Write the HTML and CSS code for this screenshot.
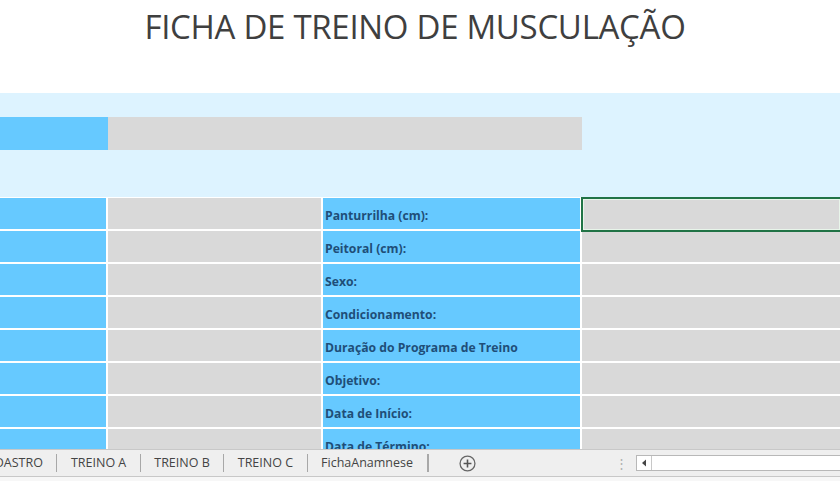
FILE: index.html
```html
<!DOCTYPE html>
<html lang="pt">
<head>
<meta charset="utf-8">
<title>Ficha de Treino de Musculação</title>
<link rel="stylesheet" href="styles.css">
</head>
<body>
<div class="page">
  <header class="title-area">
    <h1 class="title">FICHA DE TREINO DE MUSCULAÇÃO</h1>
  </header>
  <section class="band">
    <div class="band-row">
      <div class="cell-blue band-label"></div>
      <div class="cell-gray band-value"></div>
    </div>
  </section>
  <section class="grid">
    <div class="cell-blue"></div><div class="cell-gray"></div><div class="cell-blue label">Panturrilha (cm):</div><div class="cell-gray selected"></div>
    <div class="cell-blue"></div><div class="cell-gray"></div><div class="cell-blue label">Peitoral (cm):</div><div class="cell-gray"></div>
    <div class="cell-blue"></div><div class="cell-gray"></div><div class="cell-blue label">Sexo:</div><div class="cell-gray"></div>
    <div class="cell-blue"></div><div class="cell-gray"></div><div class="cell-blue label">Condicionamento:</div><div class="cell-gray"></div>
    <div class="cell-blue"></div><div class="cell-gray"></div><div class="cell-blue label">Duração do Programa de Treino</div><div class="cell-gray"></div>
    <div class="cell-blue"></div><div class="cell-gray"></div><div class="cell-blue label">Objetivo:</div><div class="cell-gray"></div>
    <div class="cell-blue"></div><div class="cell-gray"></div><div class="cell-blue label">Data de Início:</div><div class="cell-gray"></div>
    <div class="cell-blue"></div><div class="cell-gray"></div><div class="cell-blue label">Data de Término:</div><div class="cell-gray"></div>
  </section>
  <nav class="tabbar">
    <div class="tabs">
      <span class="tab tab-first">CADASTRO</span>
      <span class="tab">TREINO A</span>
      <span class="tab">TREINO B</span>
      <span class="tab">TREINO C</span>
      <span class="tab">FichaAnamnese</span>
      <span class="tab tab-end"></span>
    </div>
    <span class="add-sheet">
      <svg width="17" height="17" viewBox="0 0 16 16"><circle cx="8" cy="8" r="7" fill="none" stroke="#666" stroke-width="1.2"/><path d="M8 4.3v7.4M4.3 8h7.4" stroke="#555" stroke-width="1.5"/></svg>
    </span>
    <span class="dots">⋮</span>
    <div class="hscroll">
      <span class="arrow">
        <svg width="6" height="8" viewBox="0 0 6 8"><path d="M5 0.5L1 4l4 3.5z" fill="#444"/></svg>
      </span>
      <span class="track"></span>
    </div>
  </nav>
  <div class="status-strip"></div>
</div>
</body>
</html>
```
FILE: styles.css
```css
html, body {
  margin: 0;
  padding: 0;
  background: #ffffff;
}

.page {
  width: 840px;
  height: 481px;
  display: flex;
  flex-direction: column;
  overflow: hidden;
}

.title-area {
  height: 93px;
  flex: none;
  display: flex;
  justify-content: center;
  padding-right: 10px;
  box-sizing: border-box;
  background: #ffffff;
}

.title {
  margin: 6px 0 0 0;
  font-family: "Open Sans", "Liberation Sans", sans-serif;
  font-weight: 400;
  font-size: 33px;
  line-height: 42px;
  color: #3f3f3f;
  letter-spacing: -0.3px;
}

.band {
  height: 104px;
  flex: none;
  background: #ddf3ff;
  padding-top: 24px;
  box-sizing: border-box;
}

.band-row {
  display: flex;
  height: 33px;
}

.band-label {
  width: 108px;
}

.band-value {
  width: 474px;
}

.cell-blue {
  background: #66c9ff;
}

.cell-gray {
  background: #d9d9d9;
}

.grid {
  flex: none;
  height: 252px;
  overflow: hidden;
  background: #ffffff;
  padding-top: 1px;
  box-sizing: border-box;
  display: grid;
  grid-template-columns: 106px 213px 257px 1fr;
  grid-auto-rows: 31px;
  column-gap: 2px;
  row-gap: 2px;
  align-content: start;
}

.label {
  display: flex;
  align-items: center;
  padding-left: 2px;
  padding-top: 3px;
  box-sizing: border-box;
  font-family: "Open Sans", "Liberation Sans", sans-serif;
  font-weight: 700;
  font-size: 12.2px;
  color: #1f4e78;
  white-space: nowrap;
}

.selected {
  position: relative;
}

.selected::after {
  content: "";
  position: absolute;
  left: -1px;
  top: -1px;
  right: -2px;
  bottom: -3px;
  border: 2px solid #217346;
  box-shadow: inset 0 0 0 1px #e8f5ea;
}

.tabbar {
  height: 28px;
  flex: none;
  box-sizing: border-box;
  border-top: 1px solid #c8c8c8;
  border-bottom: 1px solid #c8c8c8;
  background: #efefef;
  display: flex;
  align-items: center;
  font-family: "Open Sans", "Liberation Sans", sans-serif;
  font-size: 12.5px;
  color: #444444;
}

.tabs {
  display: flex;
  align-items: center;
  margin-left: -21px;
}

.tab {
  padding: 0 13.5px;
  border-right: 1px solid #a8a8a8;
  line-height: 18px;
  white-space: nowrap;
}

.tab-first {
  padding-left: 0;
}

.tab-end {
  padding: 0;
  height: 18px;
}

.add-sheet {
  display: flex;
  margin-left: 30px;
}

.dots {
  margin-left: 139px;
  color: #b0b0b0;
  font-size: 13px;
  line-height: 16px;
}

.hscroll {
  margin-left: 8px;
  flex: 1;
  height: 14px;
  display: flex;
  background: #ffffff;
  border: 1px solid #b8b8b8;
  border-right: none;
}

.arrow {
  width: 14px;
  display: flex;
  align-items: center;
  justify-content: center;
  border-right: 1px solid #c8c8c8;
}

.track {
  flex: 1;
}

.status-strip {
  flex: none;
  height: 4px;
  background: #f7f7f7;
}
```
